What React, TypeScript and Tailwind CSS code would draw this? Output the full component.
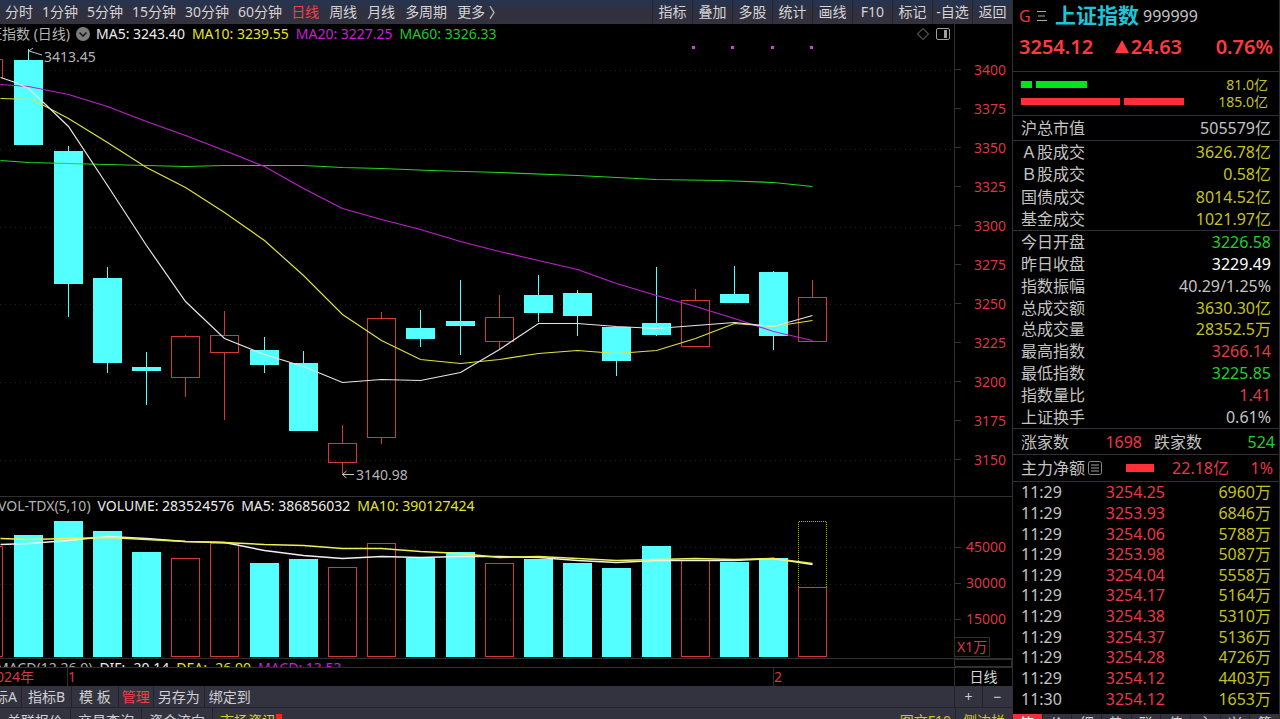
import React, { FC, ReactNode } from 'react'

type Candle = {
  up?: boolean
  top: number
  bottom: number
  high: number
  low: number
  volume: number
}

type Point = [number, number]

type Stat = {
  label: string
  value: string
  color: string
}

const CYAN = '#54ffff'
const RED = '#d23a3a'

// pane origins, all chart data below shares one vertical axis
const PRICE_TOP = 44
const VOLUME_TOP = 517
const VOLUME_BASE = 657

const candles: Candle[] = [
  { top: 60, bottom: 145, high: 49, low: 145, volume: 535 },
  { top: 151, bottom: 284, high: 146, low: 317, volume: 521 },
  { top: 278, bottom: 363, high: 267, low: 373, volume: 531 },
  { top: 367, bottom: 371, high: 352, low: 405, volume: 552 },
  { up: true, top: 336, bottom: 378, high: 335, low: 397, volume: 558 },
  { up: true, top: 335, bottom: 353, high: 311, low: 420, volume: 543 },
  { top: 350, bottom: 365, high: 337, low: 373, volume: 563 },
  { top: 363, bottom: 431, high: 351, low: 431, volume: 559 },
  { up: true, top: 443, bottom: 463, high: 425, low: 475, volume: 567 },
  { up: true, top: 318, bottom: 438, high: 312, low: 444, volume: 543 },
  { top: 328, bottom: 339, high: 310, low: 347, volume: 558 },
  { top: 321, bottom: 326, high: 280, low: 355, volume: 552 },
  { up: true, top: 317, bottom: 342, high: 295, low: 349, volume: 563 },
  { top: 295, bottom: 313, high: 275, low: 322, volume: 559 },
  { top: 293, bottom: 316, high: 290, low: 336, volume: 563 },
  { top: 327, bottom: 361, high: 327, low: 376, volume: 568 },
  { top: 323, bottom: 335, high: 267, low: 336, volume: 546 },
  { up: true, top: 300, bottom: 347, high: 289, low: 347, volume: 560 },
  { top: 294, bottom: 303, high: 266, low: 303, volume: 562 },
  { top: 272, bottom: 336, high: 271, low: 350, volume: 558 },
  { up: true, top: 297, bottom: 342, high: 280, low: 342, volume: 587 },
]

const ma5: Point[] = [
  [0, 77], [15, 82], [28, 88], [44, 103], [68, 126], [107, 185], [146, 245],
  [185, 301], [224, 338], [264, 354], [303, 366], [342, 382], [381, 379],
  [420, 380], [460, 372], [499, 349], [538, 323], [577, 323], [616, 326],
  [656, 328], [695, 325], [734, 322], [773, 326], [812, 315],
]
const ma10: Point[] = [
  [0, 98], [32, 99], [68, 118], [107, 142], [146, 167], [185, 187], [224, 212],
  [264, 240], [303, 275], [342, 314], [381, 340], [420, 359], [460, 363],
  [499, 359], [538, 353], [577, 350], [616, 353], [656, 350], [695, 338],
  [734, 323], [773, 326], [812, 320],
]
const ma20: Point[] = [
  [0, 84], [28, 86], [68, 94], [107, 106], [146, 121], [185, 135], [224, 150],
  [264, 166], [303, 188], [342, 208], [381, 219], [420, 229], [460, 241],
  [499, 251], [538, 260], [577, 269], [616, 283], [656, 295], [695, 306],
  [734, 318], [773, 331], [812, 340],
]
const ma60: Point[] = [
  [0, 160], [28, 162], [68, 163], [107, 164], [146, 165], [185, 166],
  [224, 165], [303, 165], [342, 167], [381, 168], [430, 170], [500, 172],
  [577, 175], [656, 179], [720, 180], [773, 182], [812, 186],
]
const volMa5: Point[] = [
  [0, 544], [28, 543], [68, 540], [107, 536], [146, 538], [185, 541],
  [224, 542], [264, 550], [303, 555], [342, 558], [381, 556], [420, 557],
  [460, 556], [499, 556], [538, 557], [577, 560], [616, 562], [656, 560],
  [695, 560], [734, 560], [773, 558], [812, 564],
]
const volMa10: Point[] = [
  [0, 538], [28, 539], [68, 538], [107, 537], [146, 539], [185, 541],
  [224, 542], [264, 544], [303, 545], [342, 548], [381, 548], [420, 551],
  [460, 553], [499, 557], [538, 556], [577, 558], [616, 560], [656, 559],
  [695, 558], [734, 559], [773, 558], [812, 563],
]

const minutePeriods = ['分时', '1分钟', '5分钟', '15分钟', '30分钟', '60分钟']
const dayPeriods = ['日线', '周线', '月线', '多周期', '更多 〉']
const tools = ['指标', '叠加', '多股', '统计', '画线', 'F10', '标记', '-自选', '返回']
const prices = [3400, 3375, 3350, 3325, 3300, 3275, 3250, 3225, 3200, 3175, 3150]
const volumes = [45000, 30000, 15000]
const sideTabs = ['笔', '价', '细', '势', '联', '值', '主', '兴', '筹']

const GRAY = 'text-[#c4c4c4]'
const YELLOW = 'text-[#c3c31e]'
const GREEN = 'text-[#1fd02e]'
const PINK = 'text-[#e63946]'

const turnover: Stat[] = [
  { label: 'Ａ股成交', value: '3626.78亿', color: YELLOW },
  { label: 'Ｂ股成交', value: '0.58亿', color: YELLOW },
  { label: '国债成交', value: '8014.52亿', color: YELLOW },
  { label: '基金成交', value: '1021.97亿', color: YELLOW },
]

const quote: Stat[] = [
  { label: '今日开盘', value: '3226.58', color: GREEN },
  { label: '昨日收盘', value: '3229.49', color: 'text-white' },
  { label: '指数振幅', value: '40.29/1.25%', color: GRAY },
  { label: '总成交额', value: '3630.30亿', color: YELLOW },
  { label: '总成交量', value: '28352.5万', color: YELLOW },
  { label: '最高指数', value: '3266.14', color: PINK },
  { label: '最低指数', value: '3225.85', color: GREEN },
  { label: '指数量比', value: '1.41', color: PINK },
  { label: '上证换手', value: '0.61%', color: GRAY },
]

const ticks = [
  ['11:29', '3254.25', '6960万'],
  ['11:29', '3253.93', '6846万'],
  ['11:29', '3254.06', '5788万'],
  ['11:29', '3253.98', '5087万'],
  ['11:29', '3254.04', '5558万'],
  ['11:29', '3254.17', '5164万'],
  ['11:29', '3254.38', '5310万'],
  ['11:29', '3254.37', '5136万'],
  ['11:29', '3254.28', '4726万'],
  ['11:29', '3254.12', '4403万'],
  ['11:30', '3254.12', '1653万'],
]

const centerOf = (i: number) => Math.round(28.4 + 39.2 * i)
const toPoints = (points: Point[]) =>
  points.map(([x, y]) => `${x + 0.5},${y + 0.5}`).join(' ')

const Line: FC<{ points: Point[]; color: string; width?: number }> = ({
  points,
  color,
  width = 1.2,
}) => <polyline points={toPoints(points)} fill="none" stroke={color} strokeWidth={width} />

const GridLine: FC<{ y: number }> = ({ y }) => (
  <line x1="0" x2="100%" y1={y + 0.5} y2={y + 0.5} stroke="#222222" strokeDasharray="1 4" />
)

const PriceChart: FC = () => (
  <svg className="block h-[452px] w-full" role="img" aria-label="日线">
    <g transform={`translate(0 ${-PRICE_TOP})`}>
      {[70, 149, 227, 304, 382, 460].map((y) => (
        <GridLine key={y} y={y} />
      ))}
      <path d="M0 59.5H2.5V78" fill="none" stroke={RED} />
      {candles.map(({ up, top, bottom, high, low }, i) => {
        const x = centerOf(i)
        const color = up ? RED : CYAN
        return (
          <g key={i}>
            <path
              d={`M${x + 0.5} ${high}V${top}M${x + 0.5} ${bottom}V${low}`}
              stroke={color}
            />
            {up ? (
              <rect
                x={x - 13.5}
                y={top + 0.5}
                width="28"
                height={bottom - top - 1}
                fill="none"
                stroke={color}
              />
            ) : (
              <rect x={x - 14} y={top} width="29" height={bottom - top} fill={color} />
            )}
          </g>
        )
      })}
      <Line points={ma60} color="#1fd81f" />
      <Line points={ma20} color="#c01fd0" />
      <Line points={ma10} color="#e0e03c" />
      <Line points={ma5} color="#e6e6e6" />
      {[693, 732, 772, 811].map((x) => (
        <rect key={x} x={x - 1} y="46" width="3" height="3" fill="#d63fd6" />
      ))}
      <path d="M29 51L42 55M29 51L33 48" stroke="#b4c8c8" fill="none" />
      <path d="M342.5 474.5H354M346.5 471L342.5 474.5L346.5 478" stroke="#c4c4c4" fill="none" />
      <g fill="#b4b4b4" fontSize="14">
        <text x="44" y="62">3413.45</text>
        <text x="356" y="480">3140.98</text>
      </g>
    </g>
  </svg>
)

const VolumeChart: FC = () => (
  <svg className="block h-[141px] w-full" role="img" aria-label="VOLUME">
    <g transform={`translate(0 ${-VOLUME_TOP})`}>
      {[547, 584, 619].map((y) => (
        <GridLine key={y} y={y} />
      ))}
      <path d="M0 546.5H2.5V656.5H0" fill="none" stroke={RED} />
      {candles.map(({ up, volume }, i) => {
        const x = centerOf(i)
        return up ? (
          <rect
            key={i}
            x={x - 13.5}
            y={volume + 0.5}
            width="28"
            height={VOLUME_BASE - volume - 1}
            fill="none"
            stroke={RED}
          />
        ) : (
          <rect
            key={i}
            x={x - 14}
            y={volume}
            width="29"
            height={VOLUME_BASE - volume}
            fill={CYAN}
          />
        )
      })}
      <path
        d="M798.5 587V521.5H826.5V587"
        fill="none"
        stroke="#a8a82c"
        strokeDasharray="1 1"
      />
      <Line points={volMa5} color="#f0f0f0" width={1.5} />
      <Line points={volMa10} color="#f0f050" width={1.5} />
    </g>
  </svg>
)

const AxisRow: FC<{ className: string; children: ReactNode }> = ({ className, children }) => (
  <div className={`flex items-center justify-between pr-1.5 ${className}`}>
    <span className="h-px w-1.5 bg-[#333333]" />
    {children}
  </div>
)

const StatList: FC<{ items: Stat[]; className: string }> = ({ items, className }) => (
  <dl className={`grid auto-rows-fr border-b border-[#303036] px-2 ${className}`}>
    {items.map(({ label, value, color }) => (
      <div key={label} className="flex items-center justify-between leading-5">
        <dt className={GRAY}>{label}</dt>
        <dd className={color}>{value}</dd>
      </div>
    ))}
  </dl>
)

const TopBar: FC = () => (
  <nav className="flex h-6 shrink-0 items-stretch justify-between bg-linear-to-b from-[#26344f] via-[#30303e] to-[#33323f] text-[#d4d4d8]">
    <div className="flex gap-[9px] pl-[5px]">
      {minutePeriods.map((name) => (
        <button key={name} type="button">
          {name}
        </button>
      ))}
      <div className="flex gap-2.5">
        {dayPeriods.map((name) => (
          <button
            key={name}
            type="button"
            className={name === '日线' ? 'text-[#f0404a]' : ''}
          >
            {name}
          </button>
        ))}
      </div>
    </div>
    <div className="flex">
      {tools.map((name) => (
        <button key={name} type="button" className="w-10 border-l border-[#242430]">
          {name}
        </button>
      ))}
    </div>
  </nav>
)

const ChartArea: FC = () => (
  <main className="shrink-0">
    <section className="flex">
      <div className="min-w-0 flex-1 overflow-hidden">
        <div className="-ml-[26px] flex h-5 items-center gap-1.5 whitespace-nowrap">
          <h2 className="text-[#b4b4b4]">上证指数 (日线)</h2>
          <svg className="size-3.5" viewBox="0 0 14 14">
            <circle cx="7" cy="7" r="7" fill="#7c7c7c" />
            <path d="M3.5 5.5L7 9L10.5 5.5" fill="none" stroke="#1a1a1a" strokeWidth="1.6" />
          </svg>
          <div className="flex gap-[7px]">
            <span className="text-[#ececec]">MA5: 3243.40</span>
            <span className="text-[#e4e42c]">MA10: 3239.55</span>
            <span className="text-[#c81fd8]">MA20: 3227.25</span>
            <span className="text-[#1fc82c]">MA60: 3326.33</span>
          </div>
          <svg className="ml-auto size-3.5" viewBox="0 0 14 14">
            <path d="M7 1.5L12.5 7L7 12.5L1.5 7Z" fill="none" stroke="#808080" />
          </svg>
          <svg className="mr-1 size-3.5" viewBox="0 0 14 14">
            <rect x="0.5" y="1.5" width="13" height="11" rx="1.5" fill="none" stroke="#a0a0a0" />
            <rect x="8" y="3" width="3" height="8" fill="#a0a0a0" />
          </svg>
        </div>
        <PriceChart />
      </div>
      <div className="w-[58px] border-l border-[#303030] pt-[26px] text-[#dc3640]">
        {prices.map((price) => (
          <AxisRow key={price} className="h-[39px]">{price}</AxisRow>
        ))}
      </div>
    </section>

    <section className="flex border-t border-[#303030]">
      <div className="min-w-0 flex-1 overflow-hidden">
        <div className="-ml-0.5 flex h-5 gap-[7px] whitespace-nowrap leading-[18px]">
          <h2 className="text-[#b4b4b4]">VOL-TDX(5,10)</h2>
          <span className="text-[#ececec]">VOLUME: 283524576</span>
          <span className="text-[#ececec]">MA5: 386856032</span>
          <span className="text-[#e4e42c]">MA10: 390127424</span>
        </div>
        <VolumeChart />
      </div>
      <div className="w-[58px] border-l border-[#303030] pt-8 text-[#dc3640]">
        {volumes.map((volume) => (
          <AxisRow key={volume} className="h-9">{volume}</AxisRow>
        ))}
        <span className="inline-block h-5 border border-l-0 border-[#303030] px-0.5 leading-[18px]">
          X1万
        </span>
      </div>
    </section>

    <section className="flex h-[10px] overflow-hidden border-y border-[#303030]">
      <div className="-ml-1 flex flex-1 gap-[7px] whitespace-nowrap leading-[18px]">
        <h2 className="text-[#b4b4b4]">MACD(12,26,9)</h2>
        <span className="text-[#ececec]">DIF: -20.14</span>
        <span className="text-[#e4e42c]">DEA: -26.90</span>
        <span className="text-[#c81fd8]">MACD: 13.53</span>
      </div>
      <div className="w-[58px] border border-[#303030]" />
    </section>

    <div className="flex h-[18px] overflow-hidden leading-[18px] text-[#dc3640]">
      <div className="flex w-[67px] justify-start">
        <span className="-ml-3">2024年</span>
      </div>
      <span className="w-[706px] border-l border-[#303030]">1</span>
      <span className="flex-1 border-l border-[#303030]">2</span>
      <span className="w-[58px] border-l border-[#303030] text-center text-[#d4d4d4]">日线</span>
    </div>
  </main>
)

const BottomBars: FC = () => (
  <footer className="shrink-0 bg-[#33333f] text-[#cfcfd4]">
    <div className="flex h-[22px] justify-between overflow-hidden border-b border-[#22222c]">
      <div className="-ml-5 flex divide-x divide-[#22222c]">
        <button type="button" className="pr-1">指标A</button>
        <button type="button" className="px-1.5">指标B</button>
        <button type="button" className="px-[7px]">模 板</button>
        <button type="button" className="px-[3px] text-[#f0404a]">管理</button>
        <button type="button" className="px-1">另存为</button>
        <button type="button" className="px-1">绑定到</button>
      </div>
      <div className="flex divide-x divide-[#22222c] border-l border-[#22222c]">
        <button type="button" className="w-7" aria-label="放大">+</button>
        <button type="button" className="w-[29px]" aria-label="缩小">−</button>
      </div>
    </div>
    <div className="flex h-[25px] justify-between">
      <div className="flex divide-x divide-[#22222c]">
        <button type="button" className="px-[7px]">关联报价</button>
        <button type="button" className="px-[7px]">交易查询</button>
        <button type="button" className="px-[7px]">资金流向</button>
        <button type="button" className="flex items-center px-[7px] text-[#d4d41e]">
          市场资讯
          <span className="mt-1.5 size-1.5 self-start bg-[#ff2020]" />
        </button>
      </div>
      <div className="flex divide-x divide-[#22222c] text-[#c8c81e]">
        <button type="button" className="px-1">图文F10</button>
        <button type="button" className="px-[7px]">侧边栏</button>
      </div>
    </div>
  </footer>
)

const SidePanel: FC = () => (
  <aside className="w-[268px] shrink-0 overflow-hidden border-x border-[#303036] text-base">
    <header className="h-[72px] border-b border-[#303036] pl-1.5">
      <div className="flex h-8 items-center">
        <span className="w-[18px] text-[#e63946]">G</span>
        <svg className="mr-2 size-2.5" viewBox="0 0 10 10">
          <path d="M0 0.5H9M1 5H8M0 9.5H10" stroke="#9cb4a4" />
        </svg>
        <h1 className="mr-1 text-[21px] font-bold text-[#1fc4d8]">上证指数</h1>
        <span className={GRAY}>999999</span>
      </div>
      <div className="flex h-[30px] items-center justify-between pr-1.5 text-xl font-semibold text-[#ff3a3f]">
        <span>3254.12</span>
        <span className="flex items-center gap-0.5">
          <svg className="size-3.5" viewBox="0 0 14 14">
            <path d="M7 0L14 13H0Z" fill="#ff3a3f" />
          </svg>
          24.63
        </span>
        <span className="pl-3">0.76%</span>
      </div>
    </header>

    <div className={`h-11 border-b border-[#303036] py-1 pr-[11px] pl-2 text-sm ${YELLOW}`}>
      <div className="flex h-[17px] items-center">
        <span className="mr-1 h-[7px] w-[11px] bg-[#00e41c]" />
        <span className="h-[7px] w-[51px] bg-[#00e41c]" />
        <span className="ml-auto leading-4">81.0亿</span>
      </div>
      <div className="flex h-[17px] items-center">
        <span className="mr-1 h-[7px] w-[99px] bg-[#ff3038]" />
        <span className="h-[7px] w-[60px] bg-[#ff3038]" />
        <span className="ml-auto leading-4">185.0亿</span>
      </div>
    </div>

    <StatList
      items={[{ label: '沪总市值', value: '505579亿', color: GRAY }]}
      className="h-[25px]"
    />
    <StatList items={turnover} className="h-[90px]" />
    <StatList items={quote} className="h-[198px]" />

    <div className="flex h-[26px] items-center border-b border-[#303036] pr-1 pl-2">
      <span className={GRAY}>涨家数</span>
      <span className={`w-[73px] text-right ${PINK}`}>1698</span>
      <span className={`ml-3 ${GRAY}`}>跌家数</span>
      <span className={`ml-auto ${GREEN}`}>524</span>
    </div>
    <div className="flex h-[27px] items-center border-b border-[#303036] pr-1.5 pl-2">
      <span className={GRAY}>主力净额</span>
      <svg className="ml-[3px] size-3.5" viewBox="0 0 14 14">
        <rect x="0.5" y="0.5" width="13" height="13" rx="2" fill="none" stroke="#888888" />
        <path d="M3 4H11M3 7H11M3 10H11" stroke="#a0a0a0" />
      </svg>
      <span className="ml-6 h-2 w-7 bg-[#ff3038]" />
      <span className={`w-[75px] text-right ${PINK}`}>22.18亿</span>
      <span className={`ml-auto ${PINK}`}>1%</span>
    </div>

    <table className="mb-[5px] h-[227px] w-full">
      <tbody>
        {ticks.map(([time, price, amount], i) => (
          <tr key={i} className="leading-5">
            <td className={`p-0 pl-2 ${GRAY}`}>{time}</td>
            <td className={`w-[76px] p-0 text-right ${PINK}`}>{price}</td>
            <td className={`w-[114px] p-0 pr-2 text-right ${YELLOW}`}>{amount}</td>
          </tr>
        ))}
      </tbody>
    </table>

    <div className="flex h-[17px] divide-x divide-[#22222c] bg-[#33333f] text-sm leading-[17px] text-[#d4d4d8]">
      {sideTabs.map((name, i) => (
        <button
          key={name}
          type="button"
          className={i === 0 ? 'flex-1 bg-[#f03038] text-white' : 'flex-1'}
        >
          {name}
        </button>
      ))}
    </div>
  </aside>
)

const App: FC = () => (
  <div className="flex h-screen overflow-hidden bg-black font-['Noto_Sans','Noto_Sans_CJK_SC',sans-serif] text-sm">
    <div className="flex min-w-0 flex-1 flex-col">
      <TopBar />
      <ChartArea />
      <BottomBars />
    </div>
    <SidePanel />
  </div>
)

export default App
